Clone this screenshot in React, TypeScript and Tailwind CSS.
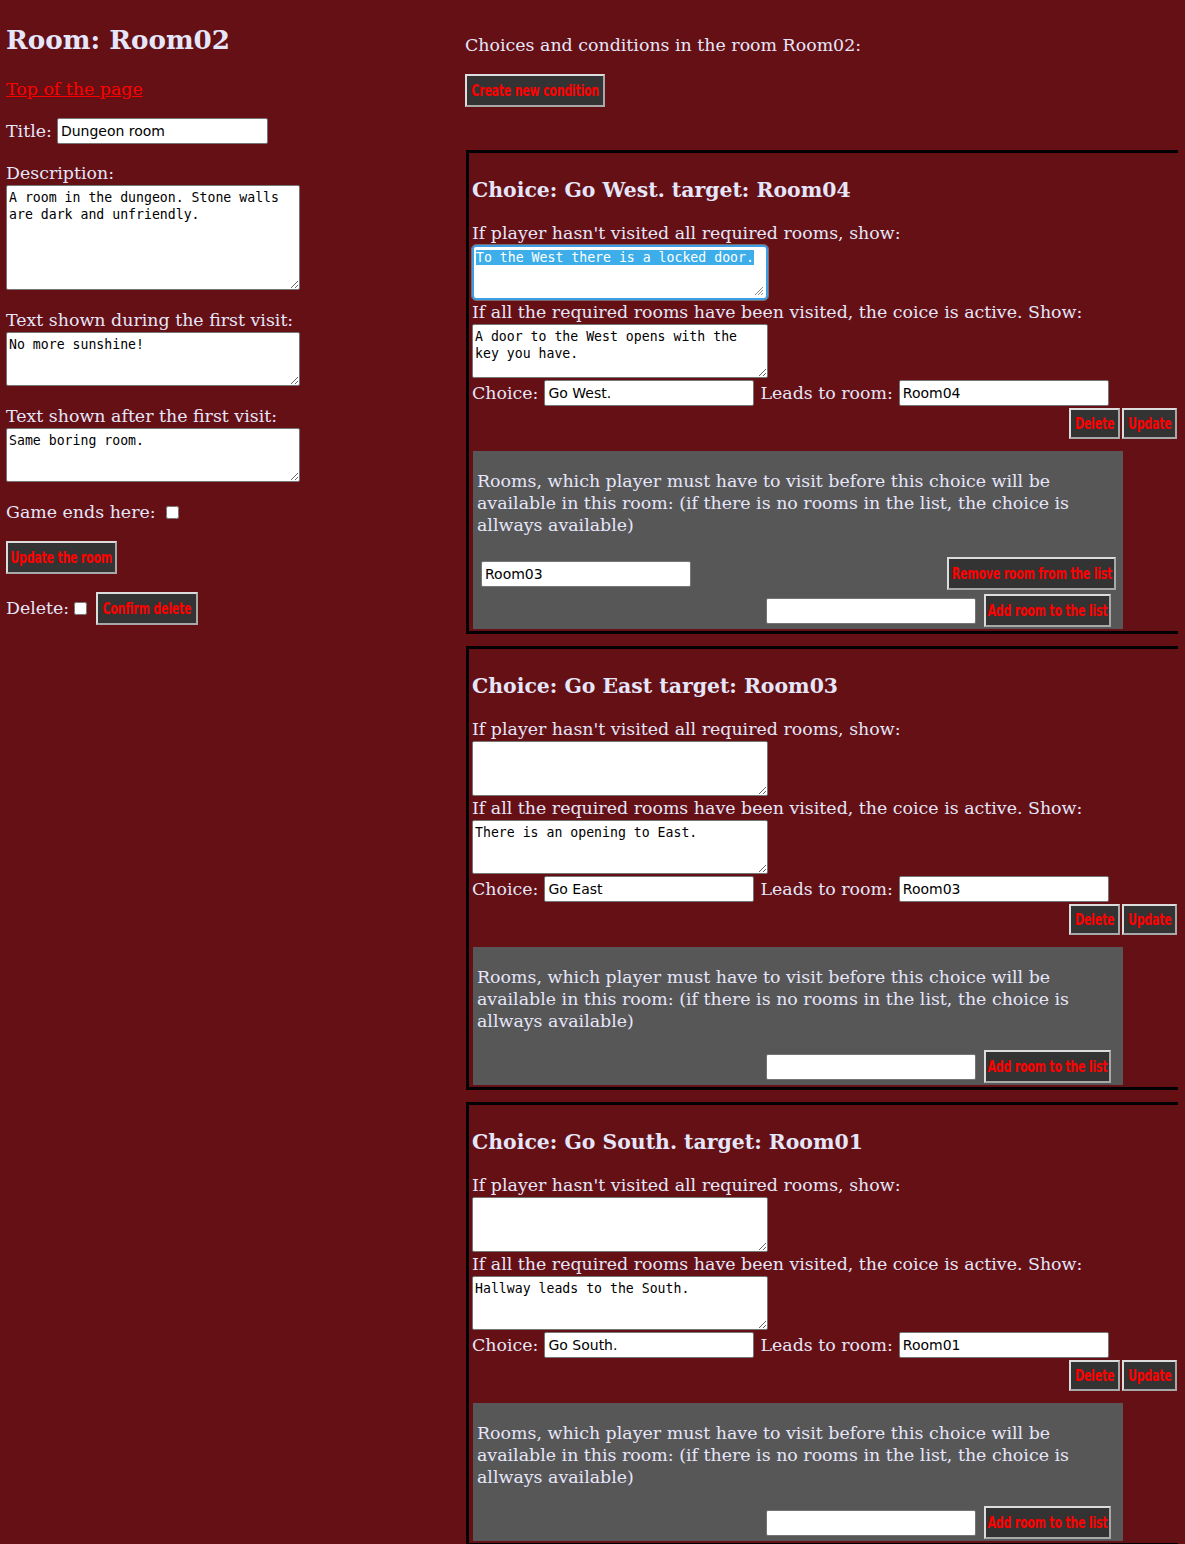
import { ReactNode } from 'react'

const serif = "font-[family-name:'DejaVu_Serif',serif]"
const sans = "font-[family-name:'DejaVu_Sans',sans-serif]"
const mono = "font-[family-name:'DejaVu_Sans_Mono',monospace]"

// Impact is not installed, so a bold sans is squeezed sideways to get the same narrow look
function Btn({ w, h = 'h-[33px]', children }: { w: string; h?: string; children: ReactNode }) {
  return (
    <button
      className={`${w} ${h} shrink-0 bg-[#333] border-2 border-t-[#dcdcdc] border-l-[#dcdcdc] border-b-[#a8a8a8] border-r-[#a8a8a8] flex items-center justify-center overflow-visible`}
    >
      <span
        className={`inline-block scale-x-[0.685] text-[#ff0000] text-[16px] font-bold tracking-[-0.3px] whitespace-nowrap ${sans}`}
      >
        {children}
      </span>
    </button>
  )
}

function TextInput({ value, w = 'w-[210px]' }: { value: string; w?: string }) {
  return (
    <input
      defaultValue={value}
      className={`${w} shrink-0 h-[26px] bg-white text-black border border-[#767676] rounded-[2px] px-[3px] text-[14px] ${sans}`}
    />
  )
}

function Area({ value, cls }: { value: string; cls: string }) {
  return (
    <textarea
      defaultValue={value}
      className={`${cls} block bg-white text-black border border-[#767676] rounded-[2px] px-[2px] pt-[3px] text-[13.2px] leading-[17px] ${mono}`}
    />
  )
}

function Grip() {
  return (
    <svg className="absolute right-[3px] bottom-[3px]" width="9" height="9" viewBox="0 0 9 9">
      <path d="M9 1 L1 9 M9 4 L4 9 M9 7 L7 9" stroke="#888" strokeWidth="1" />
    </svg>
  )
}

function FocusedArea({ value }: { value: string }) {
  return (
    <div className="relative w-[296px] h-[55px] rounded-[4px] border-2 border-[#3d9ee6] bg-white outline outline-1 outline-[#7a6a6a]">
      <div className={`px-[2px] pt-[2px] text-[13.2px] leading-[17px] ${mono}`}>
        <span className="bg-[#3daee9] text-white">{value}</span>
      </div>
      <Grip />
    </div>
  )
}

type Choice = {
  title: string
  locked: string
  active: string
  choice: string
  target: string
  rooms: string[]
  focused?: boolean
}

const choices: Choice[] = [
  {
    title: 'Choice: Go West. target: Room04',
    locked: 'To the West there is a locked door.',
    active: 'A door to the West opens with the key you have.',
    choice: 'Go West.',
    target: 'Room04',
    rooms: ['Room03'],
    focused: true
  },
  {
    title: 'Choice: Go East target: Room03',
    locked: '',
    active: 'There is an opening to East.',
    choice: 'Go East',
    target: 'Room03',
    rooms: []
  },
  {
    title: 'Choice: Go South. target: Room01',
    locked: '',
    active: 'Hallway leads to the South.',
    choice: 'Go South.',
    target: 'Room01',
    rooms: []
  }
]

function ChoiceBox({ c }: { c: Choice }) {
  return (
    <div className="ml-px w-[712px] border-l-[3px] border-y-[3px] border-black pl-[3px] pb-[2px] mb-[12px]">
      <h2 className="mt-[24px] text-[20.4px] leading-[26px] font-bold">{c.title}</h2>
      <div className="mt-[20px] leading-[20px]">If player hasn't visited all required rooms, show:</div>
      <div className="mt-[2px]">
        {c.focused ? (
          <FocusedArea value={c.locked} />
        ) : (
          <Area value={c.locked} cls="w-[296px] h-[55px]" />
        )}
      </div>
      <div className="mt-[2px] leading-[20px]">
        If all the required rooms have been visited, the coice is active. Show:
      </div>
      <Area value={c.active} cls="mt-[2px] w-[296px] h-[54px]" />
      <div className="mt-[2px] flex items-center h-[26px]">
        <span>Choice:</span>
        <span className="ml-[6px] flex">
          <TextInput value={c.choice} />
        </span>
        <span className="ml-[6px]">Leads to room:</span>
        <span className="ml-[6px] flex">
          <TextInput value={c.target} />
        </span>
      </div>
      <div className="mt-[2px] flex justify-end gap-[2px] pr-px">
        <Btn w="w-[51px]" h="h-[31px]">Delete</Btn>
        <Btn w="w-[55px]" h="h-[31px]">Update</Btn>
      </div>
      <div
        className={`mt-[12px] ml-px w-[650px] bg-[#575757] pt-[19px] ${c.rooms.length ? 'pb-[2px]' : 'pb-[2px]'}`}
      >
        <p className="px-[4px] leading-[22px]">
          Rooms, which player must have to visit before this choice will be available in this
          room: (if there is no rooms in the list, the choice is allways available)
        </p>
        {c.rooms.map((r) => (
          <div key={r} className="mt-[21px] flex items-center justify-between pl-[8px] pr-[7px]">
            <TextInput value={r} />
            <Btn w="w-[169px]">Remove room from the list</Btn>
          </div>
        ))}
        <div
          className={`${c.rooms.length ? 'mt-[4px]' : 'mt-[18px]'} flex items-center justify-end gap-[8px] pr-[12px]`}
        >
          <TextInput value="" />
          <Btn w="w-[127px]">Add room to the list</Btn>
        </div>
      </div>
    </div>
  )
}

export default function App() {
  return (
    <div className={`min-h-[1544px] bg-[#641014] text-[#e6e6fa] text-[17.4px] ${serif} flex`}>
      {/* room column */}
      <div className="w-[465px] shrink-0 pl-[6px]">
        <h1 className="pt-[24px] text-[26.2px] leading-[31px] font-bold">Room: Room02</h1>
        <a href="#" className="mt-[24px] block leading-[20px] text-[#ff0000] underline w-fit">
          Top of the page
        </a>
        <div className="mt-[19px] h-[26px] flex items-center gap-[5px]">
          <span>Title:</span>
          <TextInput value="Dungeon room" w="w-[211px]" />
        </div>
        <div className="mt-[19px] leading-[20px]">Description:</div>
        <Area
          value="A room in the dungeon. Stone walls are dark and unfriendly."
          cls="mt-[2px] w-[294px] h-[105px]"
        />
        <div className="mt-[20px] leading-[20px]">Text shown during the first visit:</div>
        <Area value="No more sunshine!" cls="mt-[2px] w-[294px] h-[54px]" />
        <div className="mt-[20px] leading-[20px]">Text shown after the first visit:</div>
        <Area value="Same boring room." cls="mt-[2px] w-[294px] h-[54px]" />
        <div className="mt-[20px] h-[20px] flex items-center">
          <span>Game ends here:</span>
          <input type="checkbox" className="ml-[10px] w-[13px] h-[13px]" />
        </div>
        <div className="mt-[19px]">
          <Btn w="w-[111px]">Update the room</Btn>
        </div>
        <div className="mt-[18px] h-[33px] flex items-center">
          <span>Delete:</span>
          <input type="checkbox" className="ml-[5px] w-[13px] h-[13px]" />
          <span className="ml-[9px]">
            <Btn w="w-[102px]">Confirm delete</Btn>
          </span>
        </div>
      </div>

      {/* choices column */}
      <div className="flex-1">
        <div className="pt-[35px] leading-[20px]">Choices and conditions in the room Room02:</div>
        <div className="mt-[19px]">
          <Btn w="w-[140px]">Create new condition</Btn>
        </div>
        <div className="mt-[43px]">
          {choices.map((c) => (
            <ChoiceBox key={c.title} c={c} />
          ))}
        </div>
      </div>
    </div>
  )
}
